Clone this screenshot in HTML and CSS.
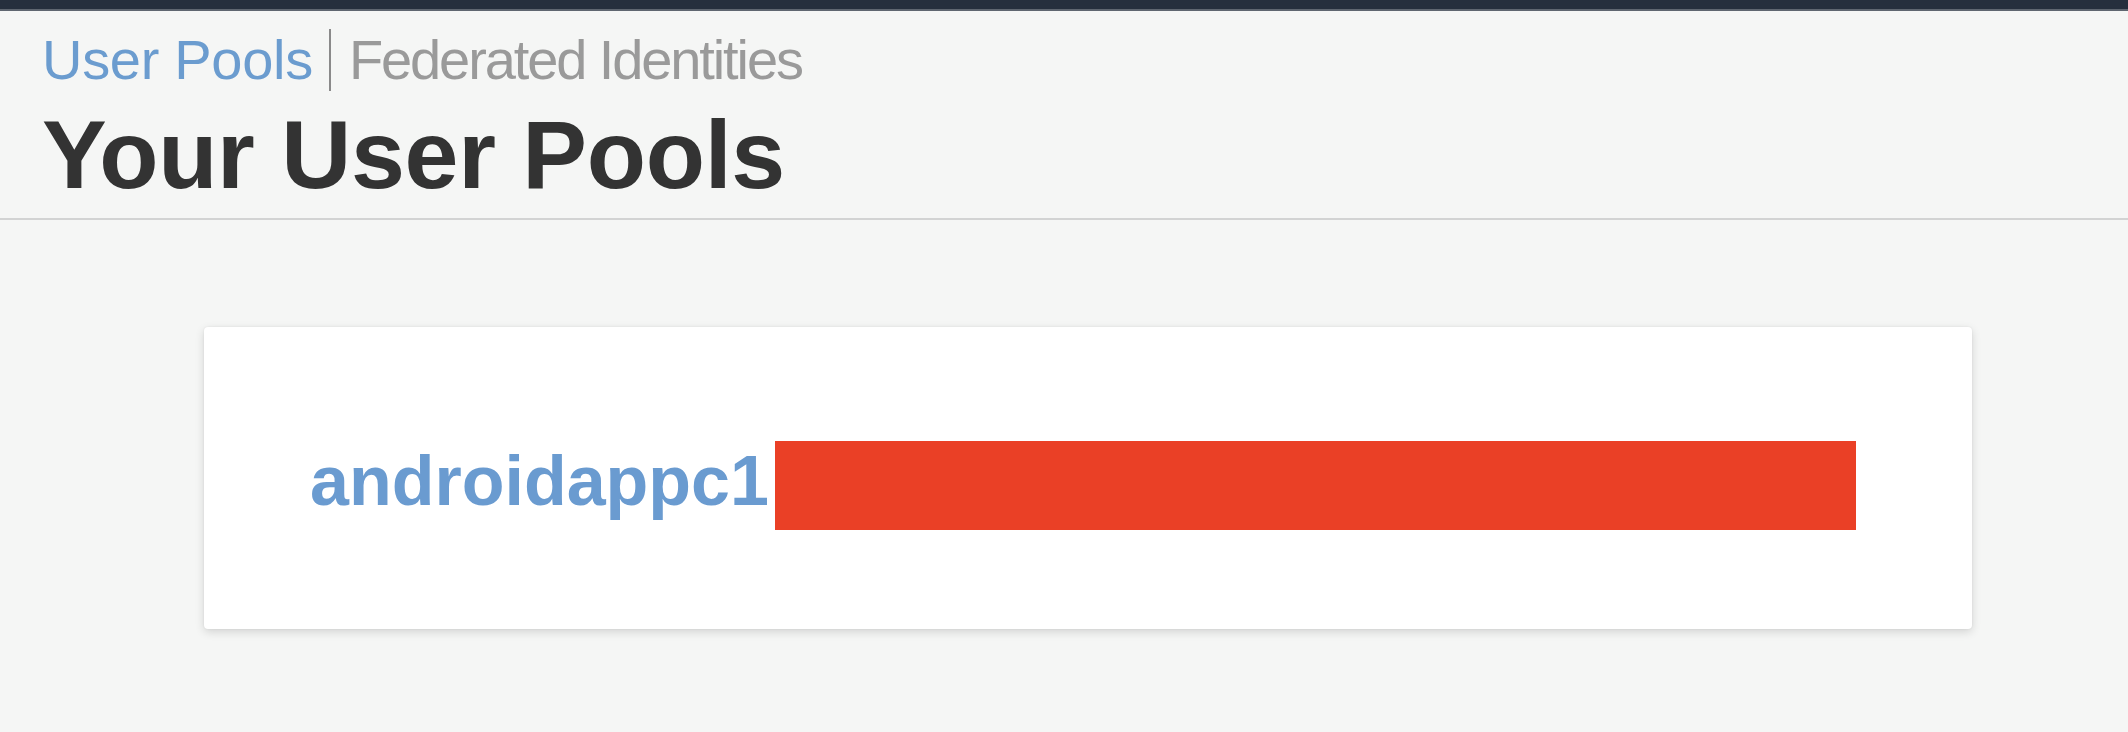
FILE: index.html
```html
<!DOCTYPE html>
<html>
<head>
<meta charset="utf-8">
<link rel="stylesheet" href="styles.css">
</head>
<body>
<div class="topbar"></div>
<header class="header">
  <nav class="tabs">
    <span class="tab tab-active">User Pools</span>
    <span class="tab-sep"></span>
    <span class="tab">Federated Identities</span>
  </nav>
  <h1 class="title">Your User Pools</h1>
</header>
<main class="content">
  <div class="card">
    <div class="pool-row">
      <span class="pool-name">androidappc1</span>
      <span class="redact"></span>
    </div>
  </div>
</main>
</body>
</html>
```

FILE: styles.css
```css
* { box-sizing: border-box; }
html, body {
  margin: 0;
  padding: 0;
  background: #f5f6f5;
  font-family: "Liberation Sans", Arial, sans-serif;
  width: 2128px;
  height: 732px;
  overflow: hidden;
}
.topbar {
  height: 11px;
  background: #262f3d;
  border-bottom: 2px solid #5f6670;
}
.header {
  padding: 21px 0 0 42px;
  border-bottom: 2px solid #d2d3d3;
  height: 209px;
}
.tabs {
  display: flex;
  align-items: center;
  height: 56px;
  gap: 16px;
}
.tab {
  font-size: 56px;
  line-height: 56px;
  color: #9a9a9a;
  font-weight: 400;
  letter-spacing: -2.1px;
}
.tab-active {
  color: #6b9ccf;
  letter-spacing: -0.3px;
}
.tab-sep {
  display: inline-block;
  width: 2px;
  height: 62px;
  background: #8a8a8a;
  margin-right: 2px;
}
.title {
  margin: 18px 0 0 0;
  font-size: 97px;
  line-height: 97px;
  font-weight: 700;
  color: #333333;
  letter-spacing: -0.3px;
}
.content {
  padding: 107px 0 0 204px;
}
.card {
  width: 1768px;
  height: 302px;
  background: #ffffff;
  border-radius: 4px;
  box-shadow: 0 3px 10px rgba(0, 0, 0, 0.14), 0 0 2px rgba(0, 0, 0, 0.08);
  padding: 114px 0 0 106px;
}
.pool-row {
  display: flex;
  align-items: flex-start;
}
.pool-name {
  font-size: 70px;
  line-height: 81px;
  font-weight: 700;
  color: #6a9bd0;
}
.redact {
  display: inline-block;
  width: 1081px;
  height: 89px;
  background: #ea4026;
  margin-left: 6px;
}
```
